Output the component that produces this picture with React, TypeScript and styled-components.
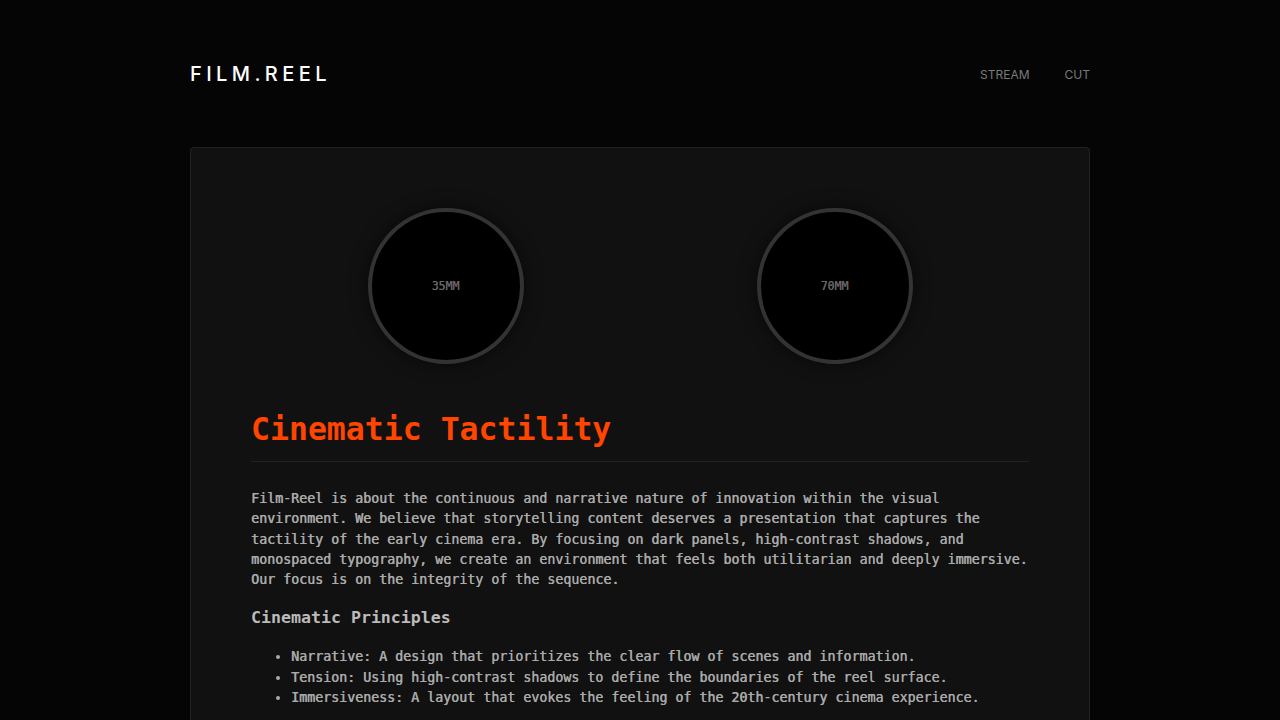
import styled, { createGlobalStyle } from 'styled-components';

const GlobalStyle = createGlobalStyle`
  html, body {
    margin: 0;
    padding: 0;
    background: #050505;
  }
  body {
    font-family: 'DejaVu Sans Mono', 'Liberation Mono', monospace;
    color: #aaaaaa;
  }
  * {
    box-sizing: border-box;
  }
`;

const Page = styled.div`
  width: 900px;
  margin: 0 auto;
  padding-top: 64px;
  min-height: 720px;
`;

const Header = styled.header`
  display: flex;
  align-items: center;
  justify-content: space-between;
  height: 20px;
  margin-bottom: 63px;
`;

const Logo = styled.div`
  font-family: Inter, 'Noto Sans', sans-serif;
  font-size: 20px;
  font-weight: 500;
  line-height: 1;
  letter-spacing: 4.4px;
  color: #ffffff;
`;

const Nav = styled.nav`
  display: flex;
  gap: 35px;
`;

const NavLink = styled.a`
  font-family: Inter, 'Noto Sans', sans-serif;
  font-size: 12px;
  font-weight: 400;
  color: #7a7a7a;
  text-transform: uppercase;
  text-decoration: none;
  cursor: pointer;
`;

const Reel = styled.main`
  background: #111111;
  border: 1px solid #222222;
  border-radius: 4px;
  padding: 60px;
`;

const Spools = styled.div`
  display: flex;
  justify-content: space-around;
  margin-bottom: 46px;
`;

const Spool = styled.div`
  width: 156px;
  height: 156px;
  border-radius: 50%;
  border: 4px solid #333333;
  background: #000000;
  box-shadow: 0 0 18px rgba(0, 0, 0, 0.6);
  display: flex;
  align-items: center;
  justify-content: center;
  font-size: 11.5px;
  color: #666666;
  text-shadow: 0.3px 0 0 currentColor;
`;

const Title = styled.h1`
  margin: 0;
  padding-bottom: 13px;
  border-bottom: 1px solid #222222;
  font-size: 31.5px;
  line-height: 38px;
  font-weight: 700;
  color: #ff4500;
`;

const Body = styled.p`
  margin: 27px 0 17px;
  font-size: 13.3px;
  line-height: 20.3px;
  color: #aaaaaa;
  text-shadow: 0.4px 0 0 currentColor;
`;

const Subtitle = styled.h2`
  margin: 0 0 18px;
  font-size: 16.6px;
  line-height: 22px;
  font-weight: 700;
  color: #bbbbbb;
`;

const Principles = styled.ul`
  margin: 0;
  padding-left: 40px;
`;

const Principle = styled.li`
  font-size: 13.3px;
  line-height: 20.4px;
  color: #aaaaaa;
  text-shadow: 0.4px 0 0 currentColor;
`;

const principles = [
  'Narrative: A design that prioritizes the clear flow of scenes and information.',
  'Tension: Using high-contrast shadows to define the boundaries of the reel surface.',
  'Immersiveness: A layout that evokes the feeling of the 20th-century cinema experience.',
];

export default function App() {
  return (
    <>
      <GlobalStyle />
      <Page>
        <Header>
          <Logo>FILM.REEL</Logo>
          <Nav>
            <NavLink>Stream</NavLink>
            <NavLink>Cut</NavLink>
          </Nav>
        </Header>
        <Reel>
          <Spools>
            <Spool>35MM</Spool>
            <Spool>70MM</Spool>
          </Spools>
          <Title>Cinematic Tactility</Title>
          <Body>
            Film-Reel is about the continuous and narrative nature of innovation within the visual
            environment. We believe that storytelling content deserves a presentation that captures the
            tactility of the early cinema era. By focusing on dark panels, high-contrast shadows, and
            monospaced typography, we create an environment that feels both utilitarian and deeply immersive.
            Our focus is on the integrity of the sequence.
          </Body>
          <Subtitle>Cinematic Principles</Subtitle>
          <Principles>
            {principles.map((p) => (
              <Principle key={p}>{p}</Principle>
            ))}
          </Principles>
        </Reel>
      </Page>
    </>
  );
}
